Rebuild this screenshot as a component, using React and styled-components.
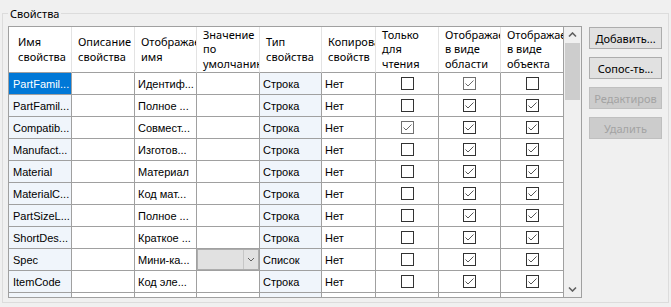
import React from "react";
import styled, { createGlobalStyle } from "styled-components";

const GlobalStyle = createGlobalStyle`
  html, body {
    margin: 0;
    padding: 0;
    background: #f0f0f0;
  }
  body {
    font-family: "Noto Sans", "Liberation Sans", sans-serif;
  }
`;

const Window = styled.div`
  width: 671px;
  height: 307px;
  box-sizing: border-box;
  padding: 0 2px 4px;
  display: flex;
  flex-direction: column;
  background: #f0f0f0;
  overflow: hidden;
`;

const GroupBox = styled.fieldset`
  flex: 1;
  min-width: 0;
  margin: 6px 0 0;
  padding: 5px 6px 4px 5px;
  border: 1px solid #dcdcdc;
`;

const Caption = styled.legend`
  padding: 0 2px;
  font-family: "Noto Sans", sans-serif;
  font-size: 11px;
  line-height: 15px;
  color: #000;
`;

const Content = styled.div`
  display: flex;
  gap: 7px;
  align-items: flex-start;
`;

const Grid = styled.div`
  width: 574px;
  height: 272px;
  box-sizing: border-box;
  border: 1px solid #a0a0a0;
  display: flex;
  background: #fff;
`;

const Rows = styled.div`
  flex: 1;
  overflow: hidden;
  display: grid;
  grid-template-columns: 63px 63px 62px 63px 62px 54px 63px 62px 63px;
  grid-template-rows: 46px;
  grid-auto-rows: 22px;
  align-content: start;
`;

const HeadCell = styled.div`
  box-sizing: border-box;
  border-right: 1px solid ${(p) => (p.$last ? "#a0a0a0" : "#e3e3e3")};
  border-bottom: 1px solid #a0a0a0;
  padding-left: ${(p) => (p.$first ? 9 : 6)}px;
  display: flex;
  flex-direction: column;
  justify-content: center;
  overflow: hidden;
  white-space: nowrap;
  font-family: "Noto Sans", sans-serif;
  font-size: 11px;
  line-height: 14.5px;
  color: #000;
  background: #fff;
`;

const HeadLine = styled.span`
  display: block;
  height: 14.5px;
`;

const Cell = styled.div`
  box-sizing: border-box;
  border-right: 1px solid #a0a0a0;
  border-bottom: 1px solid #a0a0a0;
  background: ${(p) => (p.$selected ? "#0078d7" : p.$key ? "#f0f5fb" : "#fff")};
  color: ${(p) => (p.$selected ? "#fff" : "#000")};
  padding-left: ${(p) => (p.$center || p.$combo ? 0 : p.$first ? 4 : 3)}px;
  display: flex;
  align-items: ${(p) => (p.$combo ? "stretch" : "center")};
  justify-content: ${(p) => (p.$center ? "center" : "flex-start")};
  overflow: hidden;
  white-space: nowrap;
  font-family: "Liberation Sans", Arial, sans-serif;
  font-size: 11px;
`;

const Box = styled.span`
  width: 13px;
  height: 13px;
  box-sizing: border-box;
  border: 1px solid ${(p) => (p.$muted ? "#707070" : "#333")};
  background: #fff;
  display: flex;
  align-items: center;
  justify-content: center;
`;

const Combo = styled.div`
  flex: 1;
  display: flex;
  border: 1px solid #adadad;
  background: #e1e1e1;
`;

const ComboField = styled.div`
  flex: 1;
`;

const ComboArrow = styled.div`
  width: 14px;
  border-left: 1px solid #c6c6c6;
  display: flex;
  align-items: center;
  justify-content: center;
`;

const ScrollBar = styled.div`
  width: 17px;
  display: flex;
  flex-direction: column;
  background: #f0f0f0;
`;

const ScrollArrow = styled.div`
  height: 16px;
  display: flex;
  align-items: center;
  justify-content: center;
`;

const Thumb = styled.div`
  margin: 0 1px;
  height: 57px;
  background: #cdcdcd;
`;

const ScrollGap = styled.div`
  flex: 1;
`;

const Buttons = styled.div`
  display: flex;
  flex-direction: column;
  gap: 8px;
  padding-top: 1px;
`;

const Button = styled.button`
  width: 73px;
  height: 22px;
  box-sizing: border-box;
  padding: 0;
  border: 1px solid ${(p) => (p.disabled ? "#bfbfbf" : "#adadad")};
  background: ${(p) => (p.disabled ? "#cccccc" : "#e1e1e1")};
  color: ${(p) => (p.disabled ? "#a3a3a3" : "#000")};
  font-family: "Noto Sans", sans-serif;
  font-size: 11px;
  white-space: nowrap;
  overflow: hidden;
`;

const headers = [
  ["Имя", "свойства"],
  ["Описание", "свойства"],
  ["Отображаемое", "имя"],
  ["Значение", "по", "умолчанию"],
  ["Тип", "свойства"],
  ["Копирование", "свойств"],
  ["Только", "для", "чтения"],
  ["Отображаемое", "в виде", "области"],
  ["Отображаемое", "в виде", "объекта"],
];

const rows = [
  { name: "PartFamil...", label: "Идентиф...", type: "Строка", ro: 0, area: 2, obj: 0, selected: true },
  { name: "PartFamil...", label: "Полное ...", type: "Строка", ro: 0, area: 1, obj: 1 },
  { name: "Compatib...", label: "Совмест...", type: "Строка", ro: 2, area: 1, obj: 1 },
  { name: "Manufact...", label: "Изготов...", type: "Строка", ro: 0, area: 1, obj: 1 },
  { name: "Material", label: "Материал", type: "Строка", ro: 0, area: 1, obj: 1 },
  { name: "MaterialC...", label: "Код мат...", type: "Строка", ro: 0, area: 1, obj: 1 },
  { name: "PartSizeL...", label: "Полное ...", type: "Строка", ro: 0, area: 1, obj: 1 },
  { name: "ShortDes...", label: "Краткое ...", type: "Строка", ro: 0, area: 1, obj: 1 },
  { name: "Spec", label: "Мини-ка...", type: "Список", ro: 0, area: 1, obj: 1, combo: true },
  { name: "ItemCode", label: "Код эле...", type: "Строка", ro: 0, area: 1, obj: 1 },
  { name: "", label: "", type: "", ro: 0, area: 0, obj: 0, blank: true },
];

function Chevron({ down }) {
  return (
    <svg width="9" height="6" viewBox="0 0 9 6">
      <path
        d={down ? "M1 1.5 L4.5 5 L8 1.5" : "M1 4.5 L4.5 1 L8 4.5"}
        fill="none"
        stroke="#606060"
        strokeWidth="1.6"
      />
    </svg>
  );
}

// state: 0 = empty, 1 = checked, 2 = checked (read-only look)
function CheckCell({ state, blank }) {
  return (
    <Cell $center>
      {!blank && (
        <Box $muted={state === 2}>
          {state > 0 && (
            <svg width="11" height="11" viewBox="0 0 11 11">
              <path
                d="M1.5 5.5 L4 8 L9.5 2.5"
                fill="none"
                stroke={state === 2 ? "#6a6a6a" : "#555"}
                strokeWidth="1"
              />
            </svg>
          )}
        </Box>
      )}
    </Cell>
  );
}

function DataRow({ row }) {
  return (
    <>
      <Cell $first $key $selected={row.selected}>{row.name}</Cell>
      <Cell />
      <Cell>{row.label}</Cell>
      {row.combo ? (
        <Cell $combo>
          <Combo>
            <ComboField />
            <ComboArrow>
              <svg width="8" height="5" viewBox="0 0 8 5">
                <path d="M1 1 L4 4 L7 1" fill="none" stroke="#606060" strokeWidth="1" />
              </svg>
            </ComboArrow>
          </Combo>
        </Cell>
      ) : (
        <Cell />
      )}
      <Cell $key>{row.type}</Cell>
      <Cell>{row.blank ? "" : "Нет"}</Cell>
      <CheckCell state={row.ro} blank={row.blank} />
      <CheckCell state={row.area} blank={row.blank} />
      <CheckCell state={row.obj} blank={row.blank} />
    </>
  );
}

export default function App() {
  return (
    <>
      <GlobalStyle />
      <Window>
        <GroupBox>
          <Caption>Свойства</Caption>
          <Content>
            <Grid>
              <Rows>
                {headers.map((lines, i) => (
                  <HeadCell key={i} $first={i === 0} $last={i === headers.length - 1}>
                    {lines.map((l) => (
                      <HeadLine key={l}>{l}</HeadLine>
                    ))}
                  </HeadCell>
                ))}
                {rows.map((row, i) => (
                  <DataRow key={i} row={row} />
                ))}
              </Rows>
              <ScrollBar>
                <ScrollArrow>
                  <Chevron />
                </ScrollArrow>
                <Thumb />
                <ScrollGap />
                <ScrollArrow>
                  <Chevron down />
                </ScrollArrow>
              </ScrollBar>
            </Grid>
            <Buttons>
              <Button>Добавить...</Button>
              <Button>Сопос-ть...</Button>
              <Button disabled>Редактиров</Button>
              <Button disabled>Удалить</Button>
            </Buttons>
          </Content>
        </GroupBox>
      </Window>
    </>
  );
}
